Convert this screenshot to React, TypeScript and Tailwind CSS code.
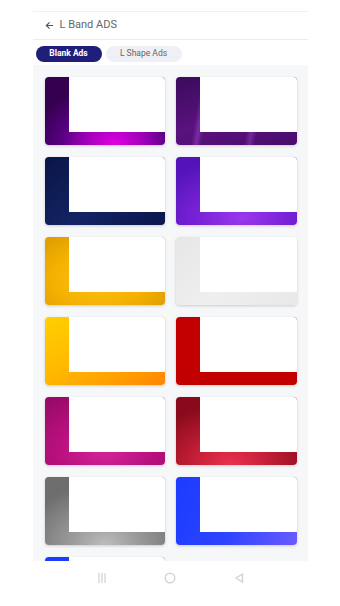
import React from "react";

const cards: string[] = [
  "bg-[radial-gradient(ellipse_70%_90%_at_58%_100%,#e400e4_0%,#a000b8_35%,#560080_65%,#34004f_100%)]",
  "bg-[linear-gradient(100deg,transparent_20%,rgba(190,90,240,0.35)_24%,transparent_28%,transparent_60%,rgba(190,90,240,0.3)_64%,transparent_68%),linear-gradient(160deg,#3a0a5c_0%,#5a127e_50%,#4a0c6c_100%)]",
  "bg-[linear-gradient(135deg,#0a1548_0%,#132464_50%,#0b174c_100%)]",
  "bg-[radial-gradient(ellipse_80%_90%_at_55%_90%,#9a38ec_0%,#7a22d8_45%,#5214b8_100%)]",
  "bg-[radial-gradient(ellipse_80%_90%_at_45%_60%,#ffc41a_0%,#f3b000_50%,#d69400_100%)]",
  "bg-[linear-gradient(135deg,#e6e6e6_0%,#efefef_50%,#e8e8e8_100%)]",
  "bg-[linear-gradient(150deg,#ffd000_0%,#ffb800_45%,#ff9a00_80%,#ff8400_100%)]",
  "bg-[#c20000]",
  "bg-[radial-gradient(ellipse_80%_90%_at_50%_80%,#d2249a_0%,#b8107e_50%,#9a0a68_100%)]",
  "bg-[radial-gradient(ellipse_70%_90%_at_45%_100%,#ea324e_0%,#c8203a_40%,#8a0a1c_100%)]",
  "bg-[radial-gradient(ellipse_70%_90%_at_50%_100%,#bdbdbd_0%,#9a9a9a_40%,#6e6e6e_100%)]",
  "bg-[linear-gradient(110deg,#1a3cff_0%,#2f44ff_50%,#6a5cff_100%)]",
  "bg-[#1a3cff]",
];

function Card({ bg }: { bg: string }) {
  return (
    <div
      className={`h-[68px] rounded-[4px] overflow-hidden pl-[24px] pb-[13px] shadow-[0_1px_3px_rgba(0,0,0,0.18)] ${bg}`}
    >
      <div className="w-full h-full bg-white" />
    </div>
  );
}

export default function App() {
  return (
    <div
      className="w-[340px] h-[606px] bg-white flex flex-col items-center overflow-hidden"
      style={{ fontFamily: "Roboto, 'Liberation Sans', sans-serif" }}
    >
      <div className="w-[275px] mt-[11px] border-t border-[#f0f0f0] flex flex-col">
        <div className="h-[28px] flex items-center pl-[12px] border-b border-[#ececec] text-[#666] text-[11px]">
          <svg width="9" height="9" viewBox="0 0 10 10" fill="none" stroke="#555" strokeWidth="1.3" className="mr-[6px]">
            <path d="M9 5H1.5M5 1.5L1.5 5L5 8.5" />
          </svg>
          <span>L Band ADS</span>
        </div>
        <div className="h-[25px] flex items-center gap-[4px] pl-[3px] pt-[2px]">
          <div className="h-[16px] w-[66px] rounded-full bg-[#1f1f7a] text-white text-[8.5px] font-bold flex items-center justify-center">
            Blank Ads
          </div>
          <div className="h-[16px] w-[76px] rounded-full bg-[#eef0f5] text-[#666] text-[8.5px] flex items-center justify-center">
            L Shape Ads
          </div>
        </div>
        <div className="h-[496px] bg-[#f6f7f9] overflow-hidden pt-[12px] pl-[12px] pr-[11px]">
          <div className="grid grid-cols-[120px_121px] gap-x-[11px] gap-y-[12px]">
            {cards.map((c, i) => (
              <Card key={i} bg={c} />
            ))}
          </div>
        </div>
      </div>
      <div className="w-[275px] flex-1 flex items-start justify-between px-[64px] pt-[11px]">
        <svg width="10" height="12" viewBox="0 0 10 12" fill="none" stroke="#d4d4d4" strokeWidth="1.3">
          <path d="M2 1V11M5 1V11M8 1V11" />
        </svg>
        <svg width="12" height="12" viewBox="0 0 12 12" fill="none" stroke="#d4d4d4" strokeWidth="1.4">
          <circle cx="6" cy="6" r="4.8" />
        </svg>
        <svg width="10" height="12" viewBox="0 0 10 12" fill="none" stroke="#d4d4d4" strokeWidth="1.4">
          <path d="M8.5 2L2 6L8.5 10Z" />
        </svg>
      </div>
    </div>
  );
}
